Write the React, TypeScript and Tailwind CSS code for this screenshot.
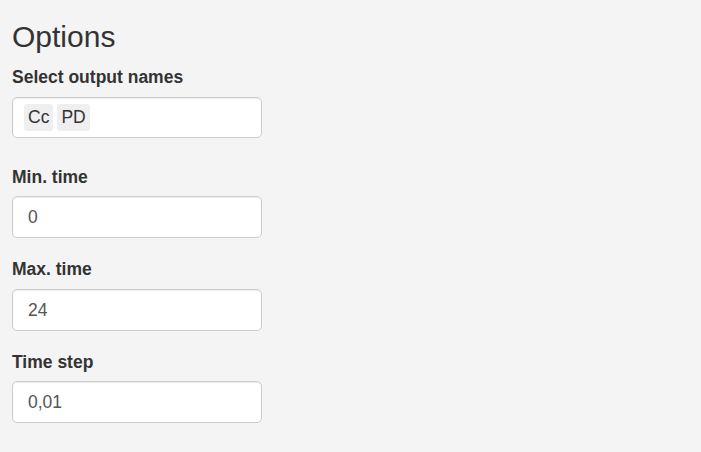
import React from 'react';

const font = { fontFamily: '"Liberation Sans", Arial, sans-serif' };

const Label: React.FC<{ text: string; className?: string }> = ({ text, className }) => (
  <label className={`block text-[17.5px] leading-[25px] font-bold text-[#333] ${className ?? ''}`}>{text}</label>
);

const NumberBox: React.FC<{ value: string; className?: string }> = ({ value, className }) => (
  <div
    className={`w-[250px] h-[42px] bg-white border border-[#ccc] rounded-[5px] shadow-[inset_0_1px_1px_rgba(0,0,0,0.075)] flex items-center px-[15px] text-[17.5px] text-[#555] ${className ?? ''}`}
  >
    {value}
  </div>
);

const App: React.FC = () => {
  const outputs = ['Cc', 'PD'];

  return (
    <div className="min-h-screen w-full bg-[#f4f4f4] px-[12px]" style={font}>
      <h3 className="pt-[20px] text-[30px] leading-[33px] font-normal text-[#333]">Options</h3>

      <Label text="Select output names" className="mt-[12px]" />
      <div className="mt-[7px] w-[250px] h-[41px] bg-white border border-[#ccc] rounded-[5px] shadow-[inset_0_1px_1px_rgba(0,0,0,0.075)] flex items-center pl-[11px] gap-[4px]">
        {outputs.map((o) => (
          <span
            key={o}
            className="h-[27px] px-[4px] rounded-[3px] bg-[#efefef] text-[#333] text-[17.5px] flex items-center"
          >
            {o}
          </span>
        ))}
      </div>

      <Label text="Min. time" className="mt-[27px]" />
      <NumberBox value="0" className="mt-[6px]" />

      <Label text="Max. time" className="mt-[19px]" />
      <NumberBox value="24" className="mt-[7px]" />

      <Label text="Time step" className="mt-[19px]" />
      <NumberBox value="0,01" className="mt-[6px]" />
    </div>
  );
};

export default App;
